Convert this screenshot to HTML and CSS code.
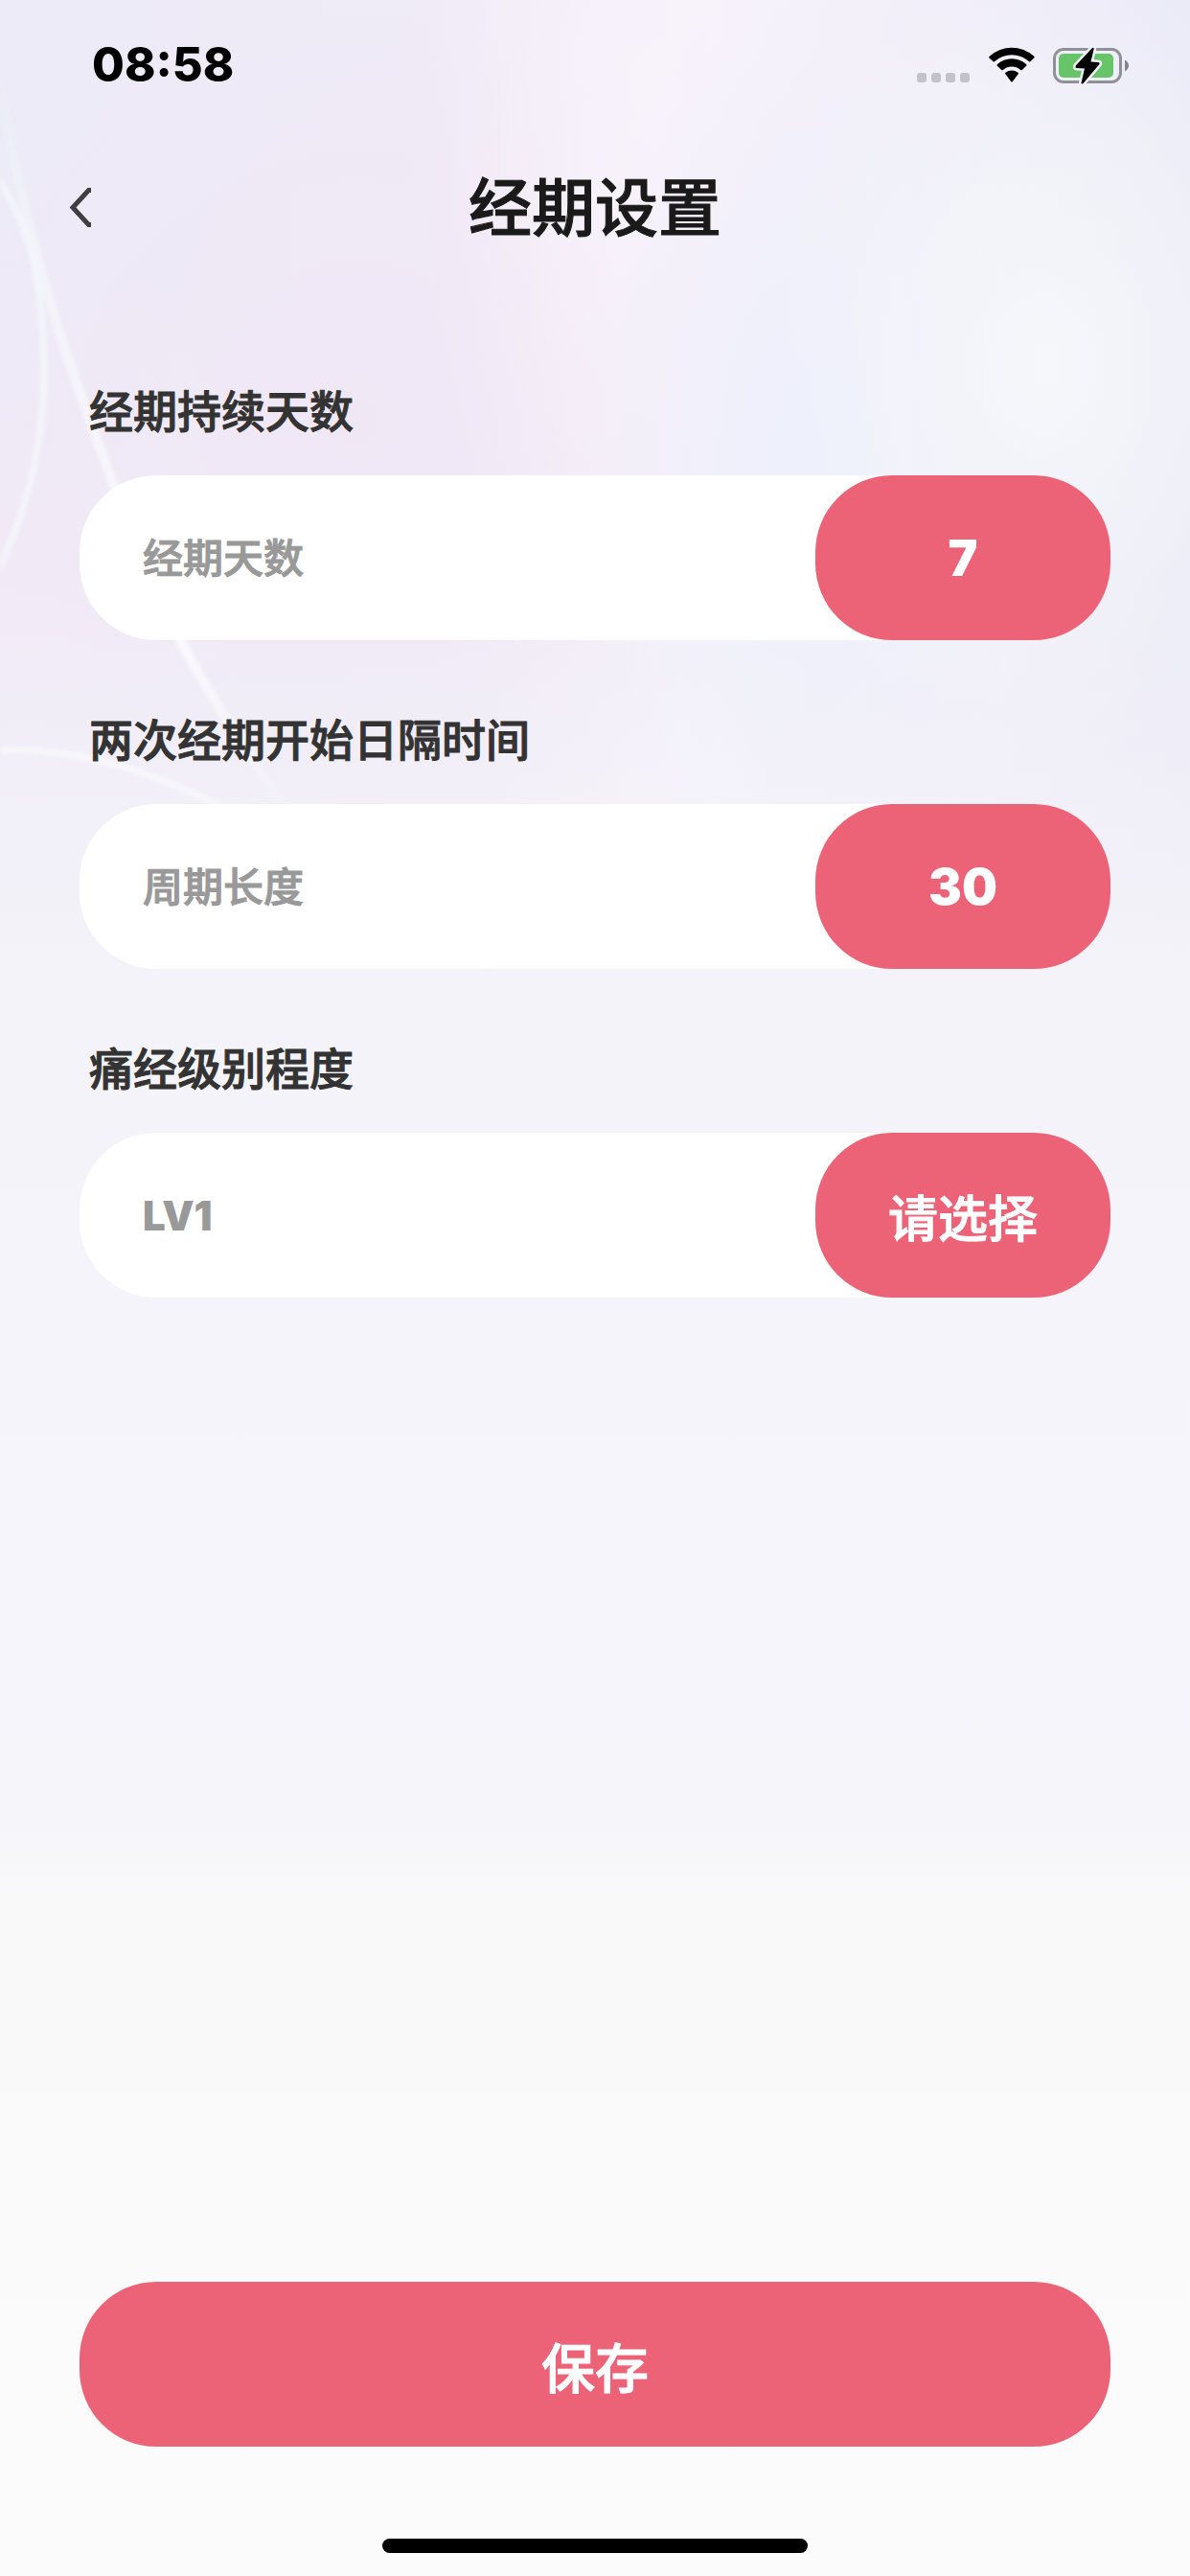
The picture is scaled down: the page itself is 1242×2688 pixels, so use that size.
FILE: index.html
```html
<!DOCTYPE html>
<html lang="zh-CN">
<head>
  <meta charset="UTF-8" />
  <meta name="viewport" content="width=device-width, initial-scale=1.0" />
  <title>经期设置</title>
  <link rel="stylesheet" href="styles.css">
</head>
<body>

  <svg class="curves" viewBox="0 0 420 880" aria-hidden="true">
    <defs>
      <linearGradient id="fade" gradientUnits="userSpaceOnUse" x1="0" y1="60" x2="0" y2="845">
        <stop offset="0" stop-color="#f4f5f9" stop-opacity="0" />
        <stop offset="0.25" stop-color="#f4f5f9" stop-opacity="0.8" />
        <stop offset="0.8" stop-color="#faf9fd" stop-opacity="1" />
        <stop offset="1" stop-color="#f8f7fb" stop-opacity="0.2" />
      </linearGradient>
    </defs>
    <path d="M-4 60Q8 150 33 245Q52 320 80 400Q98 450 117 502Q150 590 190 672Q208 706 233 745Q258 784 294 840" stroke="url(#fade)" stroke-width="10" />
    <path d="M-6 182Q12 205 25 240Q46 295 46 391Q45 490 5 580L-6 600" stroke="#f3f5fa" stroke-width="7" />
    <path d="M-6 783Q60 782 100 793Q130 799 160 811Q200 825 240 846" stroke="#f7f7fa" stroke-width="7" />
  </svg>

  <div class="page">
    <div class="status">
      <span class="time">08:58</span>
      <div class="status-icons">
        <svg width="56" height="40" viewBox="0 0 56 40" fill="#c3c1cb">
          <rect x="0" y="28" width="10" height="10" rx="3" />
          <rect x="15" y="28" width="10" height="10" rx="3" />
          <rect x="30" y="28" width="10" height="10" rx="3" />
          <rect x="45" y="28" width="10" height="10" rx="3" />
        </svg>
        <svg width="48" height="40" viewBox="0 0 48 40">
          <path d="M0 12.300Q0 11.500 1 10.600A34 34 0 0 1 47 10.600Q48 11.500 47.300 12.400L43.300 16.200Q42.600 16.800 41.800 16.100A26.500 26.500 0 0 0 6.200 16.100Q5.400 16.800 4.700 16.200Z" />
          <path d="M8.500 20.400Q8.300 19.700 9 19.100A22 22 0 0 1 39 19.100Q39.700 19.700 39.400 20.500L34.700 25Q34 25.500 33.200 24.900A14 14 0 0 0 14.800 24.900Q14 25.500 13.300 25Z" />
          <path d="M17 28.800Q16.800 28.200 17.500 27.700A11 11 0 0 1 30.500 27.700Q31.200 28.200 30.900 28.900L24.700 37.200Q24 38 23.300 37.200Z" />
        </svg>
        <svg width="80" height="40" viewBox="0 0 80 40">
          <rect x="1.500" y="3.500" width="69" height="34" rx="9.500" fill="none" stroke="#909097" stroke-width="3" />
          <path d="M75 14.500Q79 17 79 20.500Q79 24 75 26.500Z" fill="#85858b" />
          <rect x="6" y="8" width="57" height="25" rx="5" fill="#68c468" />
          <path d="M41 2L23.700 20.600Q22.800 22.800 24.500 23L33 23.500L29.500 38.500Q30 40 31.500 39L48.500 19Q49 17 47.500 17L39.500 16.500L42.700 3Q42.500 1.300 41 2Z" fill="#000" stroke="#f2f0fa" stroke-width="5" paint-order="stroke" />
        </svg>
      </div>
    </div>

    <header class="header">
      <button class="back" type="button" aria-label="返回">
        <svg width="24" height="42" viewBox="0 0 24 42"><path d="M23 2.500H20.500L4 20.500L20.500 38.500H23" fill="none" stroke="#3f3e43" stroke-width="5" /></svg>
      </button>
      <h1>经期设置</h1>
    </header>

    <form class="form">
      <div class="field">
        <label for="days">经期持续天数</label>
        <div class="row">
          <input id="days" type="text" placeholder="经期天数" readonly>
          <button class="btn btn-valor" type="button">7</button>
        </div>
      </div>
      <div class="field">
        <label for="cycle">两次经期开始日隔时间</label>
        <div class="row">
          <input id="cycle" type="text" placeholder="周期长度" readonly>
          <button class="btn btn-valor" type="button">30</button>
        </div>
      </div>
      <div class="field">
        <label for="level">痛经级别程度</label>
        <div class="row">
          <input id="level" type="text" value="LV1" readonly>
          <button class="btn btn-valor btn-select" type="button">请选择</button>
        </div>
      </div>
      <button class="btn btn-save" type="submit">保存</button>
    </form>

    <div class="home-bar"></div>
  </div>

</body>
</html>
```
FILE: styles.css
```css
* { margin: 0; padding: 0; box-sizing: border-box; }

body {
  font-family: Inter, "Noto Sans CJK SC", sans-serif;
  background-color: #fafafa;
  background-image:
    linear-gradient(to bottom, rgba(244, 243, 249, 0) 600px, #f4f3f9 1020px, #f5f4fa 1400px, #f6f5fa 1900px, #f9f9fa 1980px, #fbfbfc 100%),
    radial-gradient(ellipse 300px 420px at 88% 380px, #f5f7fa, rgba(245, 247, 250, 0)),
    radial-gradient(ellipse 240px 560px at 68% 500px, #eceffb, rgba(236, 239, 251, 0)),
    radial-gradient(ellipse 260px 560px at 56% 160px, #f8f2fb, rgba(248, 242, 251, 0)),
    radial-gradient(ellipse 460px 460px at 30% 440px, #f0e7f5, rgba(240, 231, 245, 0)),
    radial-gradient(ellipse 360px 400px at 0% 620px, #f2eaf7, rgba(242, 234, 247, 0)),
    linear-gradient(to right, #ecebf7, #f0ebf7 40%, #f7f2fb 60%, #ebeaf7 100%);
}

.curves {
  position: absolute;
  top: 0;
  left: 0;
  width: 420px;
  height: 880px;
  fill: none;
  filter: blur(2px);
}

.page {
  position: relative;
  display: flex;
  flex-direction: column;
  min-height: 100vh;
}

.status {
  display: flex;
  justify-content: space-between;
  align-items: center;
  height: 135px;
  padding: 0 63px 0 96px;
}

.time {
  font-size: 49px;
  font-weight: 800;
}

.status-icons {
  display: flex;
  gap: 19px;
}

.header {
  display: flex;
  align-items: center;
  height: 163px;
  padding: 0 72px;
}

.header h1 {
  flex: 1;
  margin-right: 24px;
  text-align: center;
  font-size: 66px;
  font-weight: 500;
  line-height: 96px;
  color: #1a1a1a;
  -webkit-text-stroke: 1px;
}

.back {
  display: flex;
  border: none;
  background: none;
  cursor: pointer;
}

.form {
  flex: 1;
  display: flex;
  flex-direction: column;
  gap: 72px;
  padding: 99px 83px 96px;
}

.field {
  display: flex;
  flex-direction: column;
  gap: 35px;
}

.field label {
  padding-left: 10px;
  font-size: 46px;
  font-weight: 500;
  line-height: 64px;
  color: #333;
  -webkit-text-stroke: 1px;
}

.row {
  display: flex;
  height: 172px;
  border-radius: 80px;
  background-color: white;
}

.row input {
  flex: 1;
  min-width: 0;
  padding-left: 66px;
  border: none;
  outline: none;
  background: none;
  font-family: inherit;
  font-size: 42px;
  font-weight: 900;
  color: #999;
}

.row input::placeholder {
  font-weight: 500;
  color: #999;
  -webkit-text-stroke: 1px;
}

.btn {
  height: 172px;
  border: none;
  border-radius: 80px;
  background-color: #ec6377;
  color: white;
  font-family: inherit;
  cursor: pointer;
}

.btn-valor {
  width: 308px;
  font-size: 52px;
  font-weight: 900;
}

.btn-select,
.btn-save {
  font-weight: 500;
  -webkit-text-stroke: 1px;
}

.btn-save {
  margin-top: auto;
  font-size: 56px;
}

.home-bar {
  align-self: center;
  width: 444px;
  height: 15px;
  margin-bottom: 24px;
  border-radius: 8px;
  background-color: black;
}
```
